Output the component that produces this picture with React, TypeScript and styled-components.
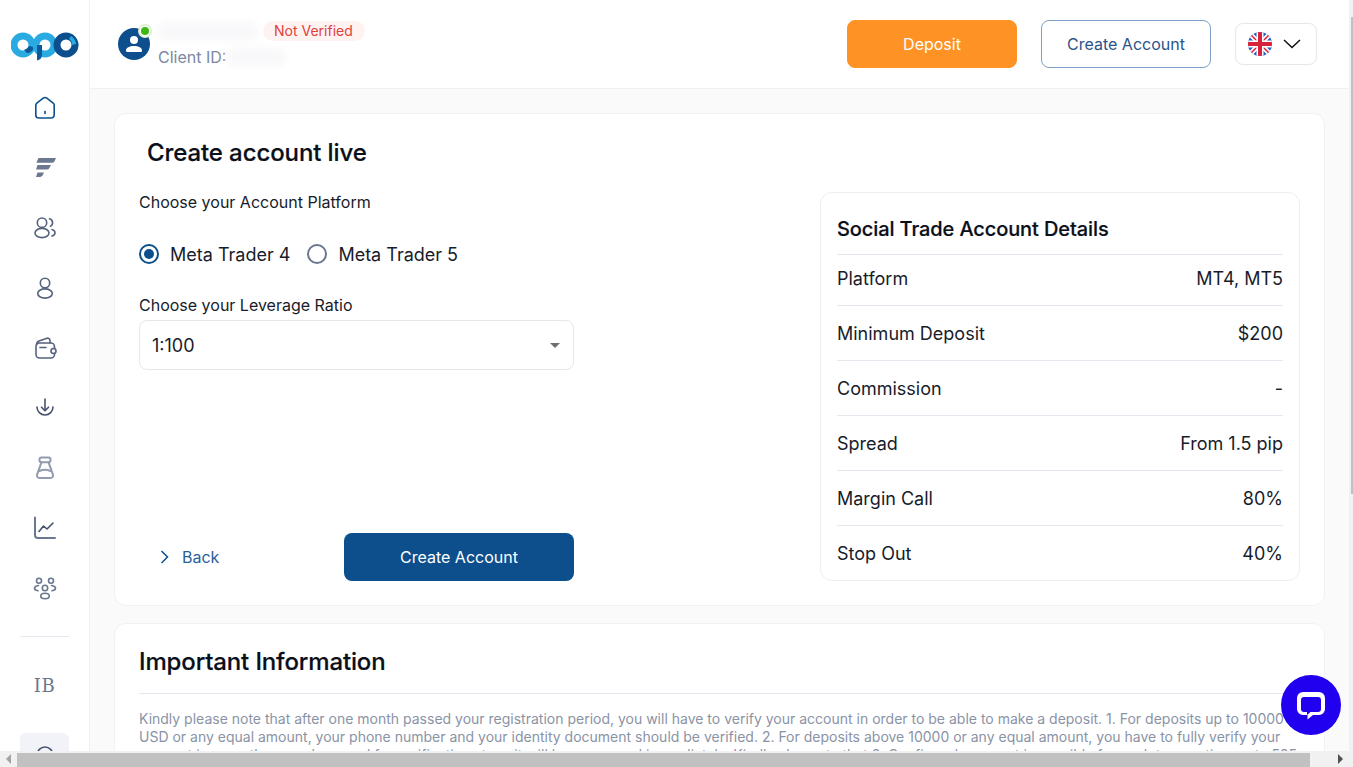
import React from 'react'
import styled, { createGlobalStyle } from 'styled-components'

const GlobalStyle = createGlobalStyle`
  html, body {
    margin: 0;
    height: 100%;
    overflow: hidden;
    background: #fff;
    font-family: "Inter", "Liberation Sans", sans-serif;
    color: #0b0f19;
  }
  * { box-sizing: border-box; }
`

const Page = styled.div`
  display: flex;
  height: 100vh;
  padding-right: 4px;
  overflow: hidden;
`

const Sidebar = styled.aside`
  width: 90px;
  flex-shrink: 0;
  border-right: 1px solid #f0f1f4;
  background: #fff;
  display: flex;
  flex-direction: column;
  align-items: center;
  overflow: hidden;
`

const LogoBox = styled.div`
  height: 78px;
  width: 100%;
  flex-shrink: 0;
  display: flex;
  align-items: center;
  justify-content: center;
  padding-top: 14px;
`

const NavItem = styled.div`
  height: 60px;
  width: 100%;
  flex-shrink: 0;
  display: flex;
  align-items: center;
  justify-content: center;
`

const NavDivider = styled.div`
  width: 49px;
  height: 1px;
  flex-shrink: 0;
  background: #e6e8f0;
  margin: 18px 0;
`

const IbLabel = styled.span`
  font-family: "DejaVu Serif", "Liberation Serif", serif;
  font-size: 18px;
  color: #6b7690;
  letter-spacing: 0.5px;
`

const SupportItem = styled.div`
  width: 49px;
  height: 50px;
  flex-shrink: 0;
  margin-top: 18px;
  border-radius: 6px;
  background: #f1f3f8;
  display: flex;
  justify-content: center;
  padding-top: 10px;
`

const Content = styled.div`
  flex: 1;
  min-width: 0;
  display: flex;
  flex-direction: column;
  background: #fafafa;
`

const Header = styled.header`
  height: 89px;
  flex-shrink: 0;
  background: #fff;
  border-bottom: 1px solid #f0f1f4;
  display: flex;
  align-items: center;
  justify-content: space-between;
  padding: 0 32px 0 28px;
`

const UserBlock = styled.div`
  display: flex;
  align-items: center;
  gap: 8px;
`

const Avatar = styled.div`
  position: relative;
  width: 32px;
  height: 32px;
  border-radius: 50%;
  background: #0d4f8c;
  display: flex;
  align-items: center;
  justify-content: center;
`

const OnlineDot = styled.span`
  position: absolute;
  top: -1px;
  right: 1px;
  width: 8px;
  height: 8px;
  border-radius: 50%;
  background: #3fb614;
  box-shadow: 0 0 0 1.5px #fff, 0 0 0 3px #d6f0cb;
`

const UserText = styled.div`
  display: flex;
  flex-direction: column;
  position: relative;
  top: 3px;
`

const NameRow = styled.div`
  display: flex;
  align-items: center;
  gap: 5px;
  height: 24px;
  margin-top: -6px;
`

const BlurredName = styled.span`
  width: 100px;
  height: 18px;
  border-radius: 8px;
  background: #f8f8fa;
  filter: blur(4px);
`

const StatusPill = styled.span`
  height: 20px;
  padding: 0 12px 0 11px;
  border-radius: 10px;
  background: #fef3f1;
  color: #e2403c;
  font-size: 14px;
  line-height: 20px;
`

const ClientRow = styled.div`
  display: flex;
  align-items: center;
  height: 24px;
  margin-top: 2px;
  font-size: 16px;
  color: #7c87a0;
`

const BlurredId = styled.span`
  width: 60px;
  height: 18px;
  border-radius: 8px;
  background: #f8f8fa;
  filter: blur(4px);
`

const HeaderActions = styled.div`
  display: flex;
  align-items: center;
  gap: 24px;
`

const HeaderButton = styled.button<{ $variant: 'orange' | 'outline' }>`
  width: 170px;
  height: 48px;
  border-radius: 8px;
  font-family: inherit;
  font-size: 16px;
  border: 1px solid ${p => (p.$variant === 'orange' ? '#ff9225' : '#7f9fc6')};
  background: ${p => (p.$variant === 'orange' ? '#ff9225' : '#fff')};
  color: ${p => (p.$variant === 'orange' ? '#fff' : '#2a5487')};
`

const LangBox = styled.div`
  width: 82px;
  height: 42px;
  border: 1px solid #e5e7eb;
  border-radius: 8px;
  display: flex;
  align-items: center;
  justify-content: space-between;
  padding: 0 14px 0 12px;
`

const Main = styled.main`
  flex: 1;
  min-height: 0;
  padding: 24px 24px 0;
  display: flex;
  flex-direction: column;
  gap: 17px;
`

const Card = styled.section`
  background: #fff;
  border: 1px solid #f1f2f5;
  border-radius: 12px;
  flex-shrink: 0;
`

const AccountCard = styled(Card)`
  height: 493px;
  padding: 24px 24px 23px;
  display: flex;
  justify-content: space-between;
`

const FormColumn = styled.div`
  width: 435px;
  display: flex;
  flex-direction: column;
`

const PageTitle = styled.h1`
  margin: 0 0 0 8px;
  font-size: 24px;
  line-height: 30px;
  font-weight: 500;
  letter-spacing: -0.1px;
  color: #0b0f19;
  -webkit-text-stroke: 0.2px #0b0f19;
`

const FieldLabel = styled.div`
  font-size: 16px;
  line-height: 20px;
  color: #171c2b;
`

const PlatformLabel = styled(FieldLabel)`
  margin-top: 24px;
`

const LeverageLabel = styled(FieldLabel)`
  margin-top: 29px;
`

const RadioRow = styled.div`
  display: flex;
  align-items: center;
  gap: 17px;
  margin-top: 30px;
  height: 24px;
`

const RadioOption = styled.label`
  display: flex;
  align-items: center;
  gap: 11px;
  font-size: 18px;
  color: #171c2b;
`

const RadioMark = styled.span<{ $checked?: boolean }>`
  width: 20px;
  height: 20px;
  border-radius: 50%;
  border: 2px solid ${p => (p.$checked ? '#0d4f8c' : '#6b7690')};
  display: flex;
  align-items: center;
  justify-content: center;
  &::after {
    content: '';
    width: 10px;
    height: 10px;
    border-radius: 50%;
    background: ${p => (p.$checked ? '#0d4f8c' : 'transparent')};
  }
`

const SelectBox = styled.div`
  height: 50px;
  margin-top: 5px;
  border: 1px solid #e5e7eb;
  border-radius: 8px;
  display: flex;
  align-items: center;
  justify-content: space-between;
  padding: 0 13px 0 12px;
  font-size: 18px;
  color: #171c2b;
`

const SelectCaret = styled.span`
  width: 0;
  height: 0;
  border-left: 5px solid transparent;
  border-right: 5px solid transparent;
  border-top: 5px solid #6f6f6f;
`

const FormActions = styled.div`
  margin-top: auto;
  margin-bottom: 1px;
  display: flex;
  align-items: center;
  justify-content: space-between;
`

const BackLink = styled.div`
  display: flex;
  align-items: center;
  gap: 13px;
  margin-left: 21px;
  font-size: 16px;
  color: #2a5f9a;
`

const SubmitButton = styled.button`
  width: 230px;
  height: 48px;
  border: none;
  border-radius: 8px;
  background: #0d4f8c;
  color: #fff;
  font-family: inherit;
  font-size: 16px;
`

const DetailsCard = styled.div`
  width: 480px;
  margin-top: 54px;
  border: 1px solid #eceef2;
  border-radius: 12px;
  padding: 0 16px;
  align-self: flex-start;
  height: 389px;
`

const DetailsTitle = styled.h2`
  margin: 0;
  height: 62px;
  display: flex;
  align-items: center;
  padding-top: 11px;
  font-size: 20px;
  font-weight: 500;
  letter-spacing: -0.1px;
  color: #0b0f19;
  -webkit-text-stroke: 0.2px #0b0f19;
  border-bottom: 1px solid #e6e8f0;
`

const DetailRow = styled.div<{ $first?: boolean }>`
  height: ${p => (p.$first ? 51 : 55)}px;
  padding-bottom: ${p => (p.$first ? 4 : 0)}px;
  display: flex;
  align-items: center;
  justify-content: space-between;
  font-size: 18px;
  color: #171c2b;
  border-bottom: 1px solid #e6e8f0;
  &:last-child {
    border-bottom: none;
  }
`

const InfoCard = styled(Card)`
  padding: 22px 24px 24px;
`

const InfoTitle = styled.h2`
  margin: 0;
  padding-bottom: 15px;
  font-size: 24px;
  line-height: 32px;
  font-weight: 500;
  letter-spacing: -0.14px;
  color: #0b0f19;
  -webkit-text-stroke: 0.2px #0b0f19;
  border-bottom: 1px solid #e6e8f0;
`

const InfoText = styled.p`
  margin: 16px 0 0;
  font-size: 14px;
  line-height: 18px;
  color: #8a93a6;
`

const ChatBubble = styled.div`
  position: fixed;
  left: 1281px;
  top: 675px;
  width: 60px;
  height: 60px;
  border-radius: 50%;
  background: #2000ee;
  display: flex;
  align-items: center;
  justify-content: center;
`

const HScrollbar = styled.div`
  position: fixed;
  left: 0;
  right: 4px;
  bottom: 0;
  height: 16px;
  background: #f1f1f1;
  display: flex;
  align-items: stretch;
`

const ScrollArrow = styled.span<{ $dir: 'left' | 'right' }>`
  width: 17px;
  flex-shrink: 0;
  display: flex;
  align-items: center;
  justify-content: center;
  margin-left: ${p => (p.$dir === 'right' ? 'auto' : '0')};
  &::after {
    content: '';
    border-top: 5px solid transparent;
    border-bottom: 5px solid transparent;
    ${p =>
      p.$dir === 'left'
        ? 'border-right: 5px solid #a3a3a3;'
        : 'border-left: 5px solid #505050;'}
  }
`

const HScrollThumb = styled.span`
  width: 1293px;
  margin-top: 2px;
  background: #c1c1c1;
`

const VScrollbar = styled.div`
  position: fixed;
  top: 0;
  right: 0;
  bottom: 0;
  width: 4px;
  background: #f1f1f1;
  padding: 17px 0 0 2px;
`

const VScrollThumb = styled.span`
  display: block;
  height: 477px;
  background: #c1c1c1;
`

const navStroke = {
  fill: 'none',
  strokeWidth: 1.6,
  strokeLinecap: 'round' as const,
  strokeLinejoin: 'round' as const,
}

const Logo = () => (
  <svg width="68" height="30" viewBox="0 0 68 30">
    <circle cx="12" cy="14" r="9" fill="none" stroke="#29abe2" strokeWidth="7" />
    <path d="M16 22c3 0 6-2 7-6l-5-1c-1 2-3 3-5 4z" fill="#0d5a9a" />
    <circle cx="34" cy="14" r="9" fill="none" stroke="#29abe2" strokeWidth="7" />
    <path d="M25 14h5v10c0 3-2 5-5 5.5z" fill="#0d5a9a" transform="translate(1 0)" />
    <circle cx="55" cy="14" r="9" fill="none" stroke="#0d4f8c" strokeWidth="7" />
    <path d="M60 5c3 2 5 5 5 8l-4 1c0-3-1-5-3-6z" fill="#29abe2" />
  </svg>
)

const HomeIcon = () => (
  <svg width="24" height="24" viewBox="0 0 24 24" {...navStroke} stroke="#0d4f8c">
    <path d="M10.200 2.200a3 3 0 0 1 3.600 0l6.400 4.900a2.600 2.600 0 0 1 1 2.100V19a3 3 0 0 1-3 3H5.800a3 3 0 0 1-3-3V9.200a2.600 2.600 0 0 1 1-2.100z" />
    <path d="M12 15.500v2" />
  </svg>
)

const FastIcon = () => (
  <svg width="24" height="24" viewBox="0 0 24 24" fill="#6b7890">
    <path d="M5.500 2H23l-1.500 3.200a3 3 0 0 1-2.500 1.600H3.300z" />
    <path d="M4.500 9H18l-1.600 3a3 3 0 0 1-2.500 1.600H3z" />
    <path d="M4.500 16.500H11l-1.500 3a3 3 0 0 1-2.500 1.500H3z" />
  </svg>
)

const UsersIcon = () => (
  <svg width="24" height="24" viewBox="0 0 24 24" {...navStroke} stroke="#56627d">
    <circle cx="9" cy="6.700" r="4.700" />
    <ellipse cx="9" cy="17" rx="7" ry="4.600" />
    <path d="M16.500 2.800a4 4 0 0 1 1 7.400" />
    <path d="M19 13.500c2 .6 3 1.900 3 3.300s-1 2.700-3 3.300" />
  </svg>
)

const UserIcon = () => (
  <svg width="24" height="24" viewBox="0 0 24 24" {...navStroke} stroke="#56627d">
    <circle cx="12" cy="7" r="4.700" />
    <ellipse cx="12" cy="17.500" rx="7.300" ry="4.600" />
  </svg>
)

const WalletIcon = () => (
  <svg width="24" height="24" viewBox="0 0 24 24" {...navStroke} stroke="#56627d">
    <rect x="3" y="7" width="18.500" height="15" rx="3.500" />
    <path d="M3.500 9c0-2 .8-3.300 2.500-4l8-2.700c1.500-.5 3 .5 3 2V7" />
    <path d="M7 11.500h6" />
    <rect x="18" y="12.500" width="5" height="5" rx="2.500" fill="#fff" />
  </svg>
)

const DownloadIcon = () => (
  <svg width="24" height="24" viewBox="0 0 24 24" {...navStroke} stroke="#46526e">
    <path d="M12 3v11.500" />
    <path d="M8.500 11.200 12 14.700l3.500-3.500" />
    <path d="M4 11a8 8 0 0 0 16 0" />
  </svg>
)

const FlaskIcon = () => (
  <svg width="24" height="24" viewBox="0 0 24 24" {...navStroke} strokeWidth="2" stroke="#929bb0">
    <rect x="6.500" y="1.500" width="11" height="4.700" rx="2" />
    <path d="M8.500 6.200 4 18.800A2.500 2.500 0 0 0 6.400 22h11.200a2.500 2.500 0 0 0 2.400-3.200L15.500 6.200" />
    <path d="M6.500 15c3.500-1.500 7.500-1.500 11 0" />
  </svg>
)

const ChartIcon = () => (
  <svg width="24" height="24" viewBox="0 0 24 24" {...navStroke} stroke="#6b7690">
    <path d="M2 1.500V19a3 3 0 0 0 3 3h17" strokeWidth="2" />
    <path d="m6 15.500 4.500-5.500 3.500 3 6-6" stroke="#46526e" />
  </svg>
)

const GroupIcon = () => (
  <svg width="24" height="24" viewBox="0 0 24 24" {...navStroke} stroke="#6b7690">
    <circle cx="6" cy="4.700" r="2.500" />
    <circle cx="18" cy="4.700" r="2.500" />
    <circle cx="12" cy="12" r="2.700" />
    <ellipse cx="12" cy="20" rx="4.300" ry="2.700" />
    <path d="M5.500 9.500C3 10 1.500 11 1.500 12.300s1.300 2.200 3.500 2.500" />
    <path d="M18.500 9.500c2.500.5 4 1.500 4 2.800s-1.300 2.200-3.500 2.500" />
  </svg>
)

const SupportIcon = () => (
  <svg width="24" height="24" viewBox="0 0 24 24" {...navStroke} stroke="#46526e">
    <path d="M4 12a8 8 0 0 1 16 0v6" />
  </svg>
)

const AvatarIcon = () => (
  <svg width="24" height="24" viewBox="0 0 24 24" fill="#fff">
    <circle cx="12" cy="8" r="4" />
    <path d="M4 18.500c0-2.800 3.500-4.500 8-4.500s8 1.700 8 4.500c0 1-.6 1.500-1.500 1.500h-13C4.600 20 4 19.500 4 18.500z" />
  </svg>
)

const UkFlag = () => (
  <svg width="24" height="24" viewBox="0 0 24 24">
    <defs>
      <clipPath id="flag-circle">
        <circle cx="12" cy="12" r="12" />
      </clipPath>
    </defs>
    <g clipPath="url(#flag-circle)">
      <rect width="24" height="24" fill="#1f5fbf" />
      <path d="M0 0 24 24M24 0 0 24" stroke="#fff" strokeWidth="5" />
      <path d="M0 0 24 24M24 0 0 24" stroke="#d8213b" strokeWidth="1.500" />
      <path d="M12 0v24M0 12h24" stroke="#fff" strokeWidth="7" />
      <path d="M12 0v24M0 12h24" stroke="#d8213b" strokeWidth="4" />
    </g>
  </svg>
)

const ChevronDown = () => (
  <svg width="20" height="20" viewBox="0 0 20 20" fill="none" stroke="#111" strokeWidth="1.500">
    <path d="m2 6 8 7.500L18 6" />
  </svg>
)

const BackChevron = () => (
  <svg width="9" height="14" viewBox="0 0 9 14" fill="none" stroke="#0d4f8c" strokeWidth="1.500">
    <path d="m1.500 1 6 6-6 6" />
  </svg>
)

const ChatIcon = () => (
  <svg width="30" height="30" viewBox="0 0 30 30">
    <path
      d="M7 2h16a6 6 0 0 1 6 6v11a6 6 0 0 1-6 6h-6l-5.500 4.500V25H7a6 6 0 0 1-6-6V8a6 6 0 0 1 6-6z"
      fill="#fff"
    />
    <path
      d="M8 7h14a3 3 0 0 1 3 3v9a3 3 0 0 1-3 3h-7.500L11 25v-3H8a3 3 0 0 1-3-3v-9a3 3 0 0 1 3-3z"
      fill="#2000ee"
    />
  </svg>
)

const details = [
  ['Platform', 'MT4, MT5'],
  ['Minimum Deposit', '$200'],
  ['Commission', '-'],
  ['Spread', 'From 1.5 pip'],
  ['Margin Call', '80%'],
  ['Stop Out', '40%'],
]

const navIcons = [
  <HomeIcon />,
  <FastIcon />,
  <UsersIcon />,
  <UserIcon />,
  <WalletIcon />,
  <DownloadIcon />,
  <FlaskIcon />,
  <ChartIcon />,
  <GroupIcon />,
]

const App: React.FC = () => {
  return (
    <>
      <GlobalStyle />
      <Page>
        <Sidebar>
          <LogoBox>
            <Logo />
          </LogoBox>
          {navIcons.map((icon, i) => (
            <NavItem key={i}>{icon}</NavItem>
          ))}
          <NavDivider />
          <NavItem>
            <IbLabel>IB</IbLabel>
          </NavItem>
          <SupportItem>
            <SupportIcon />
          </SupportItem>
        </Sidebar>

        <Content>
          <Header>
            <UserBlock>
              <Avatar>
                <AvatarIcon />
                <OnlineDot />
              </Avatar>
              <UserText>
                <NameRow>
                  <BlurredName />
                  <StatusPill>Not Verified</StatusPill>
                </NameRow>
                <ClientRow>
                  Client ID:
                  <BlurredId />
                </ClientRow>
              </UserText>
            </UserBlock>
            <HeaderActions>
              <HeaderButton $variant="orange">Deposit</HeaderButton>
              <HeaderButton $variant="outline">Create Account</HeaderButton>
              <LangBox>
                <UkFlag />
                <ChevronDown />
              </LangBox>
            </HeaderActions>
          </Header>

          <Main>
            <AccountCard>
              <FormColumn>
                <PageTitle>Create account live</PageTitle>
                <PlatformLabel>Choose your Account Platform</PlatformLabel>
                <RadioRow>
                  <RadioOption>
                    <RadioMark $checked />
                    Meta Trader 4
                  </RadioOption>
                  <RadioOption>
                    <RadioMark />
                    Meta Trader 5
                  </RadioOption>
                </RadioRow>
                <LeverageLabel>Choose your Leverage Ratio</LeverageLabel>
                <SelectBox>
                  1:100
                  <SelectCaret />
                </SelectBox>
                <FormActions>
                  <BackLink>
                    <BackChevron />
                    Back
                  </BackLink>
                  <SubmitButton>Create Account</SubmitButton>
                </FormActions>
              </FormColumn>
              <DetailsCard>
                <DetailsTitle>Social Trade Account Details</DetailsTitle>
                {details.map(([label, value], i) => (
                  <DetailRow key={label} $first={i === 0}>
                    <span>{label}</span>
                    <span>{value}</span>
                  </DetailRow>
                ))}
              </DetailsCard>
            </AccountCard>

            <InfoCard>
              <InfoTitle>Important Information</InfoTitle>
              <InfoText>
                Kindly please note that after one month passed your registration period, you will
                have to verify your account in order to be able to make a deposit. 1. For deposits
                up to 10000 USD or any equal amount, your phone number and your identity document
                should be verified. 2. For deposits above 10000 or any equal amount, you have to
                fully verify your account in more than one hour and for verification steps it will
                be processed immediately. Kindly also note that 3. Confirmed payment is possible
                for each transaction up to 525 USD.
              </InfoText>
            </InfoCard>
          </Main>
        </Content>
      </Page>

      <ChatBubble>
        <ChatIcon />
      </ChatBubble>
      <HScrollbar>
        <ScrollArrow $dir="left" />
        <HScrollThumb />
        <ScrollArrow $dir="right" />
      </HScrollbar>
      <VScrollbar>
        <VScrollThumb />
      </VScrollbar>
    </>
  )
}

export default App
